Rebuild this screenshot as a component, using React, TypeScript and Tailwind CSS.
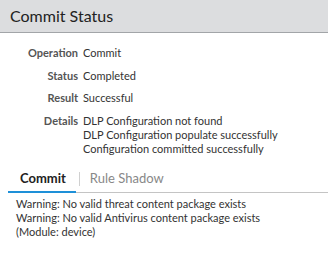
import React from 'react'

const rows: { label: string; values: string[] }[] = [
  { label: 'Operation', values: ['Commit'] },
  { label: 'Status', values: ['Completed'] },
  { label: 'Result', values: ['Successful'] },
  {
    label: 'Details',
    values: [
      'DLP Configuration not found',
      'DLP Configuration populate successfully',
      'Configuration committed successfully'
    ]
  }
]

const warnings = [
  'Warning: No valid threat content package exists',
  'Warning: No valid Antivirus content package exists',
  '(Module: device)'
]

export default function App() {
  return (
    <div
      className="w-[328px] h-[275px] bg-white text-[#333] overflow-hidden"
      style={{ fontFamily: 'Lato, "Open Sans", sans-serif' }}
    >
      <div className="h-[33px] bg-[#dcdddf] border-b border-[#a2a5a8] px-[10px] flex items-center">
        <span className="text-[16px] text-[#222]">Commit Status</span>
      </div>

      <div className="pt-[13px] flex flex-col gap-[8.5px]">
        {rows.map((row) => (
          <div key={row.label} className="grid grid-cols-[78px_1fr] gap-x-[5px] text-[11px] leading-[14px]">
            <span className="text-right font-bold text-[#555]">{row.label}</span>
            <div className="flex flex-col">
              {row.values.map((v) => (
                <span key={v}>{v}</span>
              ))}
            </div>
          </div>
        ))}
      </div>

      <div className="mt-[10px] ml-[8px] flex items-end border-b border-[#c4c4c4] h-[27px]">
        <div className="relative h-full flex items-center pl-[12px] pr-[10px]">
          <span className="text-[13px] font-bold text-[#222]">Commit</span>
          <div className="absolute left-0 right-0 -bottom-px h-[2px] bg-[#1e90d8]" />
        </div>
        <div className="h-full flex items-center ml-[3px]">
          <span className="w-px h-[14px] bg-[#d0d0d0]" />
        </div>
        <div className="h-full flex items-center pl-[10px]">
          <span className="text-[13px] text-[#888]">Rule Shadow</span>
        </div>
      </div>

      <div className="pt-[4px] pl-[16px] flex flex-col text-[11px] leading-[14px]">
        {warnings.map((w) => (
          <span key={w}>{w}</span>
        ))}
      </div>
    </div>
  )
}
